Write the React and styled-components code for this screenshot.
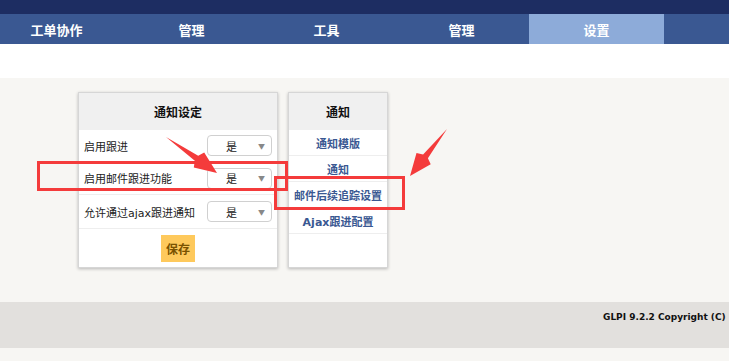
import React from 'react'
import styled, { createGlobalStyle } from 'styled-components'

const GlobalStyle = createGlobalStyle`
  html, body {
    margin: 0;
    padding: 0;
    background: #f7f6f3;
    font-family: "DejaVu Sans", "Noto Sans CJK SC", sans-serif;
  }
`

const Page = styled.div`
  position: relative;
  width: 729px;
  height: 361px;
  overflow: hidden;
  background: #f7f6f3;
`

const TopBar = styled.div`
  height: 14px;
  background: #1d2d62;
`

const Nav = styled.ul`
  display: flex;
  height: 30px;
  margin: 0;
  padding: 0;
  list-style: none;
  background: #3a5892;
  .track {
    display: flex;
    margin-left: -11px;
  }
`

const NavItem = styled.li`
  width: 135px;
  flex: none;
  display: flex;
  align-items: center;
  justify-content: center;
  color: #fff;
  font-size: 13px;
  font-weight: bold;
  font-family: "Noto Sans CJK SC", sans-serif;
  background: ${p => (p.$active ? '#8dabd9' : 'transparent')};
`

const WhiteStrip = styled.div`
  height: 34px;
  background: #fff;
`

const Main = styled.div`
  display: flex;
  gap: 10px;
  align-items: flex-start;
  height: 224px;
  padding: 14px 0 0 78px;
  box-sizing: border-box;
`

const Card = styled.div`
  width: ${p => p.$width}px;
  height: 176px;
  box-sizing: border-box;
  background: #fff;
  border: 1px solid #d6d6d6;
  box-shadow: 0 1px 3px rgba(0, 0, 0, 0.25);
`

const CardHead = styled.div`
  height: 37px;
  display: flex;
  align-items: center;
  justify-content: center;
  background: #f0f0f0;
  font-size: 12px;
  font-weight: bold;
  color: #111;
  font-family: "Noto Sans CJK SC", sans-serif;
`

const Row = styled.div`
  height: ${p => p.$h}px;
  display: flex;
  align-items: center;
  justify-content: space-between;
  padding: 0 5px;
  border-bottom: 1px solid #eeeeee;
  box-sizing: border-box;
  font-size: 11px;
  color: #222;
`

const Select = styled.div`
  width: 65px;
  height: 21px;
  box-sizing: border-box;
  border: 1px solid #d0d0d0;
  border-radius: 4px;
  background: #fff;
  display: flex;
  align-items: center;
  padding: 0 6px 0 18px;
  justify-content: space-between;
  font-size: 11px;
  color: #222;
  font-family: "Noto Sans CJK SC", sans-serif;
  span {
    font-size: 7px;
    color: #888;
  }
`

const SaveRow = styled.div`
  height: 38px;
  display: flex;
  align-items: center;
  justify-content: center;
`

const SaveButton = styled.button`
  width: 34px;
  height: 27px;
  border: none;
  padding: 0;
  background: #fec95c;
  color: #7a5200;
  font-size: 12px;
  font-weight: bold;
  font-family: "Noto Sans CJK SC", sans-serif;
`

const LinkRow = styled.a`
  height: 26px;
  display: flex;
  align-items: center;
  justify-content: center;
  border-bottom: 1px solid #eeeeee;
  box-sizing: border-box;
  color: #3a5892;
  font-size: 11px;
  font-weight: bold;
  text-decoration: none;
`

const Footer = styled.div`
  height: 46px;
  background: #e2e0dd;
  padding: 10px 0 0 603px;
  box-sizing: border-box;
  font-size: 9px;
  font-weight: bold;
  color: #111;
  white-space: nowrap;
`

const Mark = styled.div`
  position: absolute;
  left: ${p => p.$x}px;
  top: ${p => p.$y}px;
  width: ${p => p.$w}px;
  height: ${p => p.$h}px;
  box-sizing: border-box;
  border: 3px solid #f43b3b;
  pointer-events: none;
`

const Arrows = styled.svg`
  position: absolute;
  left: 0;
  top: 0;
  pointer-events: none;
`

const settings = [
  { label: '启用跟进', h: 32 },
  { label: '启用邮件跟进功能', h: 33 },
  { label: '允许通过ajax跟进通知', h: 34 },
]

const links = ['通知模版', '通知', '邮件后续追踪设置', 'Ajax跟进配置']

const App = () => {
  return (
    <Page>
      <GlobalStyle />
      <TopBar />
      <Nav>
        <div className="track">
          <NavItem>工单协作</NavItem>
          <NavItem>管理</NavItem>
          <NavItem>工具</NavItem>
          <NavItem>管理</NavItem>
          <NavItem $active>设置</NavItem>
        </div>
      </Nav>
      <WhiteStrip />
      <Main>
        <Card $width={200}>
          <CardHead>通知设定</CardHead>
          {settings.map(s => (
            <Row key={s.label} $h={s.h}>
              {s.label}
              <Select>
                是<span>▼</span>
              </Select>
            </Row>
          ))}
          <SaveRow>
            <SaveButton>保存</SaveButton>
          </SaveRow>
        </Card>
        <Card $width={100}>
          <CardHead>通知</CardHead>
          {links.map(l => (
            <LinkRow key={l} href="#">{l}</LinkRow>
          ))}
        </Card>
      </Main>
      <Footer>GLPI 9.2.2 Copyright (C)</Footer>

      <Mark $x={37} $y={161} $w={251} $h={30} />
      <Mark $x={274} $y={176} $w={131} $h={34} />
      <Arrows width="729" height="361">
        <polygon
          fill="#f43b3b"
          points="166,137 198.2,155.8 204.2,152.6 217,173 193.8,167.4 194.8,160.8"
        />
        <polygon
          fill="#f43b3b"
          points="447,129 427.9,158.2 430.7,164.3 410,176 416.5,153.1 423.1,154.4"
        />
      </Arrows>
    </Page>
  )
}

export default App
